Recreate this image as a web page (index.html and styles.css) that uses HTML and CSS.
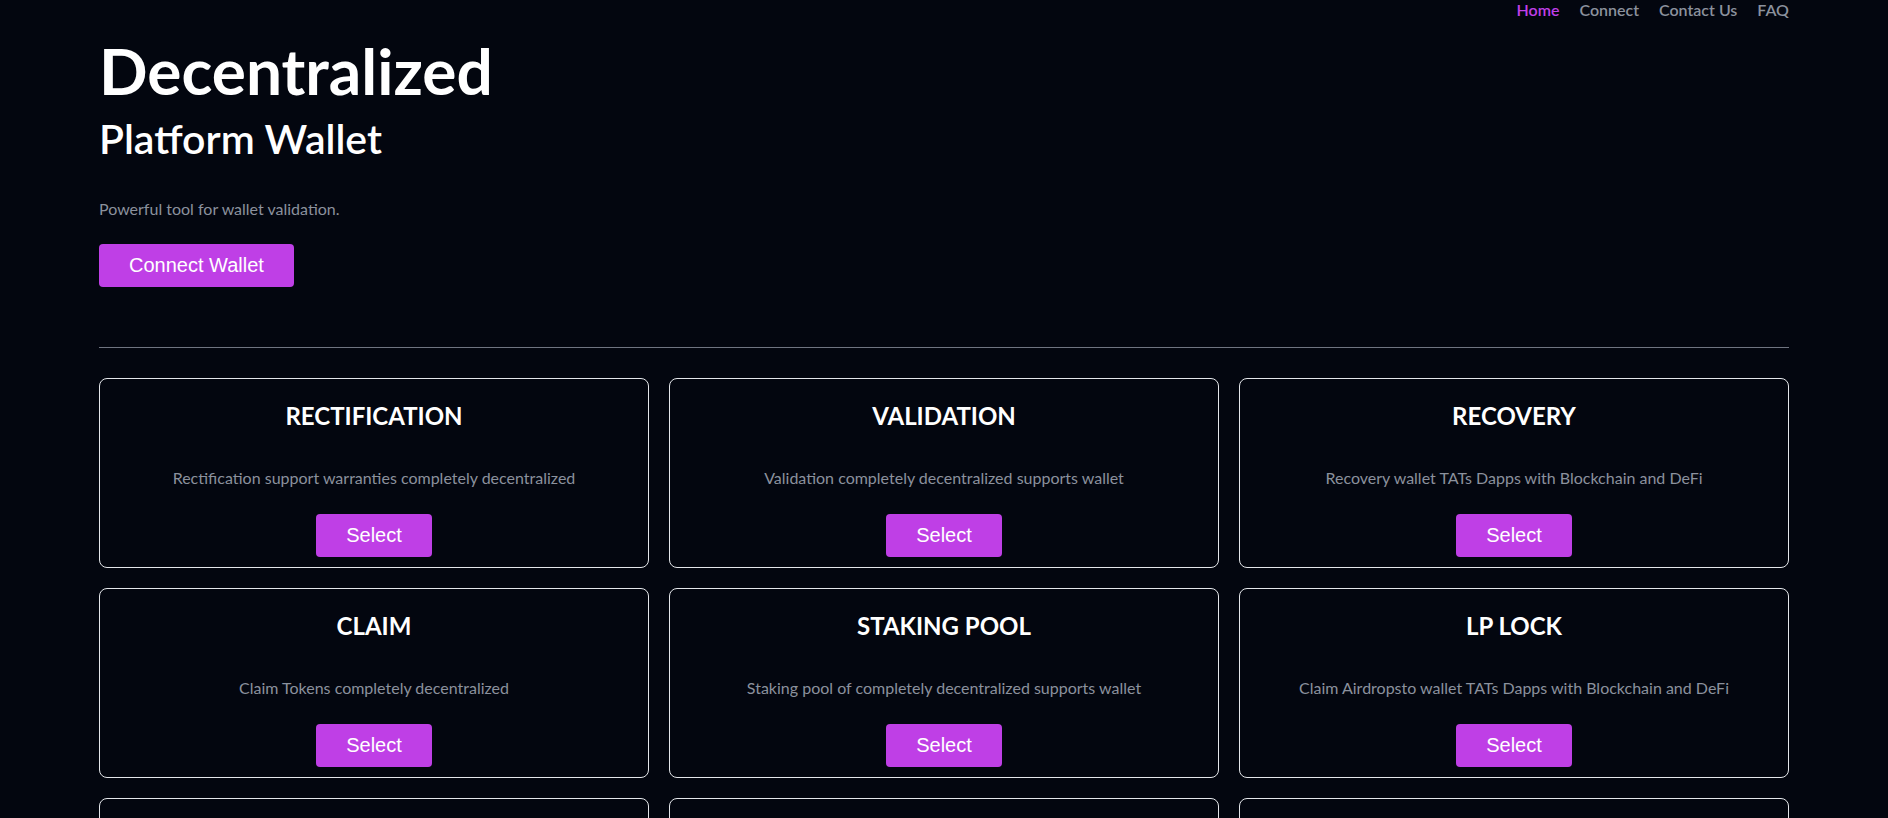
FILE: index.html
```html
<!DOCTYPE html>
<html lang="en">
<head>
  <meta charset="UTF-8">
  <meta name="viewport" content="width=device-width, initial-scale=1.0">
  <title>Decentralized Platform Wallet</title>
  <link rel="stylesheet" href="styles.css">
</head>
<body>
  <div class="page">
    <!-- Top navigation -->
    <nav class="top-nav">
      <a href="#" class="nav-link active">Home</a>
      <a href="#" class="nav-link">Connect</a>
      <a href="#" class="nav-link">Contact Us</a>
      <a href="#" class="nav-link">FAQ</a>
    </nav>

    <!-- Hero -->
    <header class="hero">
      <h1>Decentralized</h1>
      <h2>Platform Wallet</h2>
      <p class="hero-text">Powerful tool for wallet validation.</p>
      <button class="main-btn">Connect Wallet</button>
    </header>

    <hr class="divider">

    <!-- Service cards -->
    <section class="card-grid">
      <div class="card">
        <h3>RECTIFICATION</h3>
        <p>Rectification support warranties completely decentralized</p>
        <button class="main-btn">Select</button>
      </div>
      <div class="card">
        <h3>VALIDATION</h3>
        <p>Validation completely decentralized supports wallet</p>
        <button class="main-btn">Select</button>
      </div>
      <div class="card">
        <h3>RECOVERY</h3>
        <p>Recovery wallet TATs Dapps with Blockchain and DeFi</p>
        <button class="main-btn">Select</button>
      </div>
      <div class="card">
        <h3>CLAIM</h3>
        <p>Claim Tokens completely decentralized</p>
        <button class="main-btn">Select</button>
      </div>
      <div class="card">
        <h3>STAKING POOL</h3>
        <p>Staking pool of completely decentralized supports wallet</p>
        <button class="main-btn">Select</button>
      </div>
      <div class="card">
        <h3>LP LOCK</h3>
        <p>Claim Airdropsto wallet TATs Dapps with Blockchain and DeFi</p>
        <button class="main-btn">Select</button>
      </div>
      <div class="card">
        <h3>MIGRATION</h3>
        <p>Migration of tokens completely decentralized</p>
        <button class="main-btn">Select</button>
      </div>
      <div class="card">
        <h3>BRIDGE</h3>
        <p>Bridge assets across chains with your wallet</p>
        <button class="main-btn">Select</button>
      </div>
      <div class="card">
        <h3>SWAP</h3>
        <p>Swap tokens with Blockchain and DeFi</p>
        <button class="main-btn">Select</button>
      </div>
    </section>
  </div>
</body>
</html>
```

FILE: styles.css
```css
body {
  margin: 0;
  font-family: Lato, "Open Sans", sans-serif;
  background-color: #03060f;
  color: #fff;
}

.page {
  padding: 0 99px 40px;
}

.top-nav {
  display: flex;
  justify-content: flex-end;
  gap: 20px;
}

.nav-link {
  color: #8b919d;
  text-decoration: none;
  font-size: 16px;
  font-weight: 600;
}

.nav-link.active {
  color: #c03fe8;
}

.hero h1 {
  margin: 13px 0 0;
  font-size: 64px;
  font-weight: 700;
}

.hero h2 {
  margin: 5px 0 0;
  font-size: 41px;
  font-weight: 600;
}

.hero-text {
  margin: 36px 0 0;
  font-size: 16px;
  color: #8b919d;
}

.main-btn {
  background-color: #bf3fe6;
  color: #fff;
  border: none;
  padding: 10px 30px;
  font-family: "Liberation Sans", Arial, sans-serif;
  font-size: 20px;
  line-height: 23px;
  border-radius: 4px;
  cursor: pointer;
}

.main-btn:hover {
  background-color: #cf66ee;
}

.hero .main-btn {
  margin-top: 26px;
}

.divider {
  margin: 60px 0 30px;
  border: none;
  border-top: 1px solid #6f7480;
}

.card-grid {
  display: grid;
  grid-template-columns: repeat(3, 1fr);
  gap: 20px;
}

.card {
  border: 1px solid #e4e6ea;
  border-radius: 8px;
  padding: 22px 20px 10px;
  text-align: center;
}

.card h3 {
  margin: 0;
  font-size: 24px;
  font-weight: 700;
}

.card p {
  margin: 38px 0 27px;
  font-size: 16px;
  color: #8b919d;
}
```
